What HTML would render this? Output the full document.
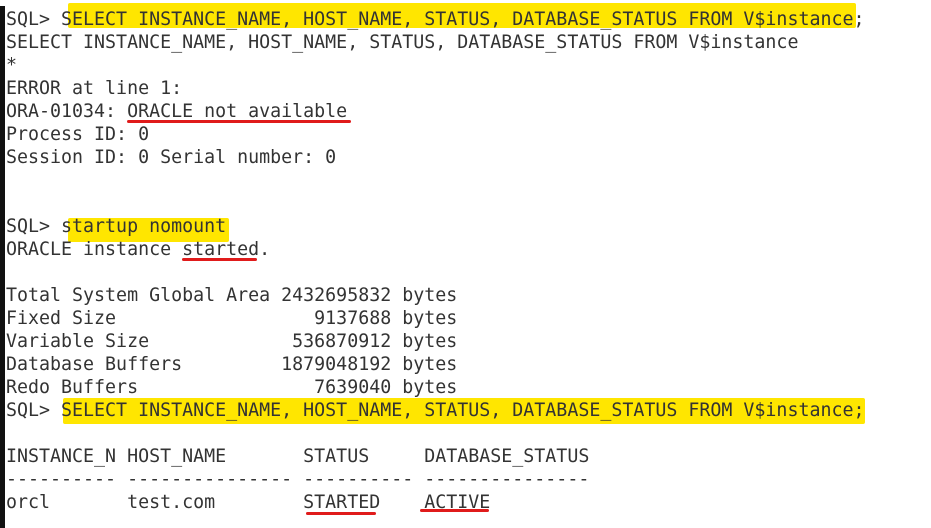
<!DOCTYPE html>
<html><head><meta charset="utf-8"><style>
html,body{margin:0;padding:0;background:#fff;width:931px;height:528px;overflow:hidden;position:relative}
.bar{position:absolute;left:0;top:6px;width:5px;height:522px;background:#111}
.hl{position:absolute;background:#ffe600;border-radius:2px}
.ul{position:absolute;background:#e01b1b;height:3px;border-radius:2px}
pre{position:absolute;left:6px;top:8px;margin:0;font-family:"DejaVu Sans Mono","Liberation Mono",monospace;font-size:18.3px;line-height:23px;color:#333}
</style></head><body>
<div class="bar"></div>
<div class="hl" style="left:68px;top:3px;width:788px;height:25px"></div>
<div class="hl" style="left:68px;top:218px;width:161px;height:24px"></div>
<div class="hl" style="left:63px;top:398px;width:802px;height:26px"></div>
<pre>SQL> SELECT INSTANCE_NAME, HOST_NAME, STATUS, DATABASE_STATUS FROM V$instance;
SELECT INSTANCE_NAME, HOST_NAME, STATUS, DATABASE_STATUS FROM V$instance
*
ERROR at line 1:
ORA-01034: ORACLE not available
Process ID: 0
Session ID: 0 Serial number: 0


SQL> startup nomount
ORACLE instance started.

Total System Global Area 2432695832 bytes
Fixed Size                  9137688 bytes
Variable Size             536870912 bytes
Database Buffers         1879048192 bytes
Redo Buffers                7639040 bytes
SQL> SELECT INSTANCE_NAME, HOST_NAME, STATUS, DATABASE_STATUS FROM V$instance;

INSTANCE_N HOST_NAME       STATUS     DATABASE_STATUS
---------- --------------- ---------- ---------------
orcl       test.com        STARTED    ACTIVE</pre>
<div class="ul" style="left:127px;top:120px;width:224px"></div>
<div class="ul" style="left:182px;top:258px;width:75px"></div>
<div class="ul" style="left:306px;top:512px;width:70px"></div>
<div class="ul" style="left:420px;top:509px;width:69px"></div>
</body></html>
